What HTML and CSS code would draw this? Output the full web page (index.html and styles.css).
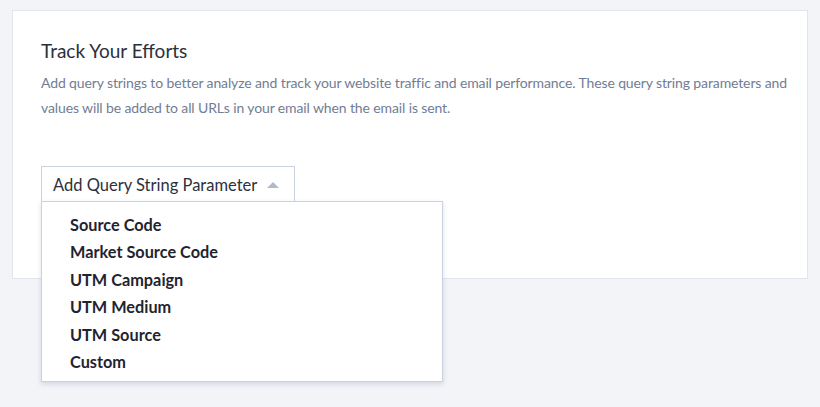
FILE: index.html
```html
<!DOCTYPE html>
<html>
	<head>
		<meta charset="UTF-8">
		<title>Track Your Efforts</title>
		<link rel="stylesheet" href="styles.css">
	</head>
	<body>
		<div class="panel">
			<h2 class="panel-title">Track Your Efforts</h2>
			<p class="panel-text">Add query strings to better analyze and track your website traffic and email performance. These query string parameters and values will be added to all URLs in your email when the email is sent.</p>
			<div class="qs-drop">
				<button class="qs-btn" type="button">Add Query String Parameter <span class="caret"></span></button>
				<ul class="qs-menu">
					<li>Source Code</li>
					<li>Market Source Code</li>
					<li>UTM Campaign</li>
					<li>UTM Medium</li>
					<li>UTM Source</li>
					<li>Custom</li>
				</ul>
			</div>
		</div>
	</body>
</html>
```

FILE: styles.css
```css
html,body{
	min-height:100%;
}
body{
	margin:0;
	min-height:407px;
	background:#f3f4f8;
	font-family:Lato,"Open Sans",sans-serif;
}
.panel{
	margin:10px 12px 0 12px;
	background:#fff;
	border:1px solid #e1e5ec;
	padding:28px 18px 76px 28px;
}
.panel-title{
	margin:0;
	font-size:19px;
	line-height:24px;
	font-weight:400;
	color:#2b303b;
}
.panel-text{
	margin:7px 0 0 0;
	font-size:14px;
	letter-spacing:-0.12px;
	line-height:25px;
	color:#717d94;
}
.qs-drop{
	position:relative;
	margin-top:46px;
	display:inline-block;
}
.qs-btn{
	display:flex;
	align-items:center;
	height:36px;
	padding:0 15px 0 11px;
	background:#fff;
	border:1px solid #c9d2e1;
	border-bottom:none;
	font-family:inherit;
	font-size:16.5px;
	color:#2b303b;
	gap:10px;
}
.caret{
	width:0;
	height:0;
	border-left:6px solid transparent;
	border-right:6px solid transparent;
	border-bottom:6px solid #b0bacb;
}
.qs-menu{
	position:absolute;
	left:0;
	top:35px;
	width:400px;
	margin:0;
	padding:9px 0 6px 0;
	list-style:none;
	background:#fff;
	border:1px solid #c9d2e1;
	box-shadow:0 2px 5px rgba(60,75,110,0.18);
}
.qs-menu li{
	padding-left:28px;
	font-size:16.3px;
	font-weight:700;
	line-height:27.4px;
	color:#1f2430;
}
```
